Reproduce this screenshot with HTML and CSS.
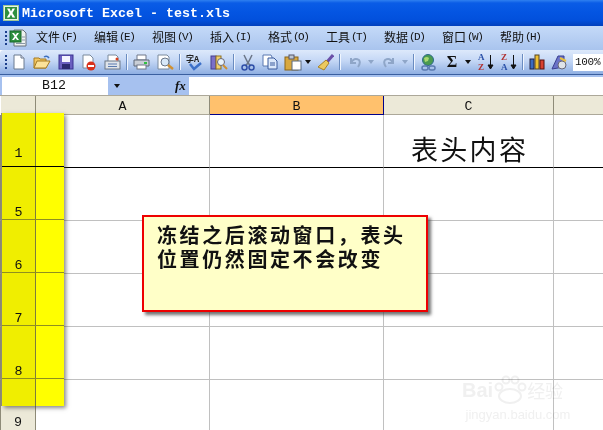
FILE: index.html
```html
<!DOCTYPE html>
<html lang="zh">
<head>
<meta charset="utf-8">
<title>Microsoft Excel - test.xls</title>
<link rel="stylesheet" href="styles.css">
</head>
<body>
<div class="titlebar">
  <svg class="appicon" width="16" height="16" viewBox="0 0 16 16"><rect x=".5" y=".5" width="15" height="15" fill="#e8f4e4" stroke="#9fc79a"/><rect x="2" y="2" width="12" height="12" fill="#2f8f3f"/><path d="M4 3.500h2.600L8 6.500l1.500-3H12L9.400 8l2.800 4.600H9.500L8 9.600l-1.600 3H3.800L6.600 8z" fill="#fff"/></svg>
  <span class="title">Microsoft Excel - test.xls</span>
</div>
<div class="menubar">
  <span class="grip"></span>
  <svg class="docicon" width="18" height="18" viewBox="0 0 18 18"><path d="M5 1h9l3 3v13H5z" fill="#eef2f0" stroke="#66707c"/><rect x="1" y="2" width="11" height="11" fill="#2f8f3f" stroke="#16662a"/><path d="M3 4h2l1.500 2L8 4h2L7.500 7.500 10 11H8L6.500 9 5 11H3l2.500-3.500z" fill="#fff"/><path d="M13 8h3M13 11h3M7 14.500h9" stroke="#8a98a8"/></svg>
  <nav class="menus">
    <span class="menu">文件<i>(F)</i></span>
    <span class="menu">编辑<i>(E)</i></span>
    <span class="menu">视图<i>(V)</i></span>
    <span class="menu">插入<i>(I)</i></span>
    <span class="menu">格式<i>(O)</i></span>
    <span class="menu">工具<i>(T)</i></span>
    <span class="menu">数据<i>(D)</i></span>
    <span class="menu">窗口<i>(W)</i></span>
    <span class="menu">帮助<i>(H)</i></span>
  </nav>
</div>
<div class="toolbar">
  <span class="grip"></span>
  <svg class="tool" width="14" height="16" viewBox="0 0 14 16"><path d="M2 1h7l3 3v11H2z" fill="#fff" stroke="#6a7a90"/><path d="M9 1v3h3" fill="#dde" stroke="#6a7a90"/></svg>
  <svg class="tool" width="18" height="16" viewBox="0 0 18 16"><path d="M1 4h5l1 1h6v9H1z" fill="#f2c660" stroke="#a67a20"/><path d="M1 14l3-7h13l-4 7z" fill="#fbe29a" stroke="#a67a20"/><path d="M11 3q3-2 5 1" fill="none" stroke="#3c6fc0" stroke-width="1.500"/></svg>
  <svg class="tool" width="16" height="16" viewBox="0 0 16 16"><rect x="1" y="1" width="14" height="14" fill="#6a5fc0" stroke="#3a3290"/><rect x="4" y="2" width="8" height="6" fill="#f4f4ff"/><rect x="4" y="10" width="8" height="5" fill="#2c2a70"/></svg>
  <svg class="tool" width="16" height="17" viewBox="0 0 16 17"><path d="M2 1h7l3 3v10H2z" fill="#fff" stroke="#7a8a9c"/><circle cx="10" cy="12" r="4.500" fill="#d8301c"/><rect x="7" y="11" width="6" height="2" fill="#fff"/></svg>
  <svg class="tool" width="17" height="16" viewBox="0 0 17 16"><path d="M4 1h8l2 2v5H4z" fill="#fff" stroke="#7a8a9c"/><rect x="1" y="7" width="15" height="8" fill="#dfe4ea" stroke="#6c7888"/><path d="M4 10h9M4 12.500h9" stroke="#5a7ab0"/><circle cx="13" cy="5" r="1.500" fill="#d84020"/></svg>
  <span class="sep"></span>
  <svg class="tool" width="17" height="16" viewBox="0 0 17 16"><path d="M4 1h9v5H4z" fill="#fff" stroke="#70798a"/><path d="M1 6h15v6H1z" fill="#c9ced6" stroke="#5e6878"/><rect x="4" y="11" width="9" height="4" fill="#fff" stroke="#70798a"/><rect x="11" y="8" width="3" height="2" fill="#30c040"/></svg>
  <svg class="tool" width="17" height="16" viewBox="0 0 17 16"><path d="M1 1h9l2 2v12H1z" fill="#fff" stroke="#7a8a9c"/><circle cx="8" cy="8" r="4" fill="#d8e8f8" stroke="#6a7688"/><path d="M11 11l5 4" stroke="#d09030" stroke-width="2.500"/></svg>
  <span class="sep"></span>
  <svg class="tool tight" width="18" height="17" viewBox="0 0 18 17"><text class="spelltext" x="0" y="8">字A</text><path d="M4 10l4 5 7-6" fill="none" stroke="#3c70c8" stroke-width="2.500"/></svg>
  <svg class="tool tight" width="18" height="17" viewBox="0 0 18 17"><rect x="1" y="2" width="5" height="13" fill="#7a70c8" stroke="#443c90"/><rect x="6" y="2" width="5" height="13" fill="#f0d070" stroke="#907020"/><circle cx="11" cy="8" r="3.500" fill="#e8f2fb" stroke="#667"/><path d="M13 11l4 4" stroke="#d09030" stroke-width="2"/></svg>
  <span class="sep"></span>
  <svg class="tool tight" width="16" height="17" viewBox="0 0 16 17"><path d="M4 1l4 8 4-8M8 9l-3 3M8 9l3 3" fill="none" stroke="#6b7688" stroke-width="1.500"/><circle cx="4.500" cy="13.500" r="2.500" fill="none" stroke="#2f4fa8" stroke-width="1.500"/><circle cx="11.500" cy="13.500" r="2.500" fill="none" stroke="#2f4fa8" stroke-width="1.500"/></svg>
  <svg class="tool tight" width="16" height="16" viewBox="0 0 16 16"><path d="M1 1h8l1 2v9H1z" fill="#fff" stroke="#5a78b0"/><path d="M6 4h6l3 3v8H6z" fill="#dbe8fa" stroke="#3a5a9c"/><path d="M8 9h5M8 11h5" stroke="#3a5a9c"/></svg>
  <span class="pastegroup">
    <svg width="18" height="17" viewBox="0 0 18 17"><rect x="1" y="3" width="13" height="13" fill="#d8a840" stroke="#8a6418"/><rect x="5" y="1" width="5" height="4" fill="#bcc6d2" stroke="#556"/><rect x="8" y="7" width="9" height="9" fill="#fff" stroke="#5a6a80"/></svg>
    <span class="caret"></span>
  </span>
  <svg class="tool tight" width="17" height="17" viewBox="0 0 17 17"><path d="M16 1l-6 7" stroke="#6a50a8" stroke-width="3"/><path d="M9 6l3 3-5 7-6-3z" fill="#ecc960" stroke="#a88228"/></svg>
  <span class="sep"></span>
  <span class="pastegroup muted">
    <svg width="14" height="14" viewBox="0 0 14 14"><path d="M3 3v5h5" fill="none" stroke="#8fa6c8" stroke-width="2"/><path d="M3 8q3-6 8-3 2 3-1 7" fill="none" stroke="#8fa6c8" stroke-width="2"/></svg>
    <span class="caret faded"></span>
  </span>
  <span class="pastegroup muted">
    <svg width="14" height="14" viewBox="0 0 14 14"><path d="M11 3v5H6" fill="none" stroke="#8fa6c8" stroke-width="2"/><path d="M11 8q-3-6-8-3-2 3 1 7" fill="none" stroke="#8fa6c8" stroke-width="2"/></svg>
    <span class="caret faded"></span>
  </span>
  <span class="sep"></span>
  <svg class="tool tight" width="17" height="17" viewBox="0 0 17 17"><circle cx="8" cy="6" r="5.500" fill="#4a9a50" stroke="#2c6a8a"/><path d="M4 4q3-2 5 0l-1 3-3 1z" fill="#a8d870"/><rect x="2" y="12" width="6" height="4" rx="2" fill="none" stroke="#5a7ab0" stroke-width="1.500"/><rect x="9" y="12" width="6" height="4" rx="2" fill="none" stroke="#5a7ab0" stroke-width="1.500"/></svg>
  <span class="sigma">Σ</span>
  <span class="caret"></span>
  <span class="sort"><b class="blue">A</b><b class="red">Z</b></span>
  <svg class="arrow" width="7" height="15" viewBox="0 0 7 15"><path d="M3.500 0v13M1 10l2.500 4L6 10z" fill="#111" stroke="#111"/></svg>
  <span class="sort"><b class="red">Z</b><b class="blue">A</b></span>
  <svg class="arrow" width="7" height="15" viewBox="0 0 7 15"><path d="M3.500 0v13M1 10l2.500 4L6 10z" fill="#111" stroke="#111"/></svg>
  <span class="sep"></span>
  <svg class="tool tight" width="16" height="16" viewBox="0 0 16 16"><rect x="1" y="5" width="4" height="10" fill="#3a6ac0" stroke="#224"/><rect x="6" y="1" width="4" height="14" fill="#f0c030" stroke="#542"/><rect x="11" y="6" width="4" height="9" fill="#d84030" stroke="#511"/></svg>
  <svg class="tool tight" width="17" height="17" viewBox="0 0 17 17"><path d="M1 15L7 2h6v11z" fill="#6a72c8" stroke="#3a3f90"/><circle cx="11" cy="11" r="4" fill="#dfe3e8" stroke="#667"/><path d="M9 4l6 3" stroke="#e8c040" stroke-width="2"/></svg>
  <span class="zoomvalue">100%</span>
</div>
<div class="formulabar">
  <span class="namebox">B12</span>
  <span class="namecaret"><span class="caret"></span></span>
  <span class="fx">fx</span>
  <span class="formula"></span>
</div>
<main class="sheet">
  <div class="grid">
    <div class="colhead corner"></div>
    <div class="colhead">A</div>
    <div class="colhead active">B</div>
    <div class="colhead">C</div>
    <div class="colhead"></div>

    <div class="rowhead"></div>
    <div class="cell headline"></div>
    <div class="cell headline"></div>
    <div class="cell headline"></div>
    <div class="cell headline last"></div>

    <div class="rowhead"></div><div class="cell"></div><div class="cell"></div><div class="cell"></div><div class="cell last"></div>
    <div class="rowhead"></div><div class="cell"></div><div class="cell"></div><div class="cell"></div><div class="cell last"></div>
    <div class="rowhead"></div><div class="cell"></div><div class="cell"></div><div class="cell"></div><div class="cell last"></div>
    <div class="rowhead"></div><div class="cell"></div><div class="cell"></div><div class="cell"></div><div class="cell last"></div>
    <div class="rowhead nine">9</div><div class="cell"></div><div class="cell"></div><div class="cell"></div><div class="cell last"></div>
  </div>

  <div class="headertext">表头内容</div>

  <div class="frozen">
    <div class="frozenrow first"><span class="frozenlabel">1</span><span class="frozenblank"></span></div>
    <div class="frozenrow"><span class="frozenlabel">5</span><span class="frozenblank"></span></div>
    <div class="frozenrow"><span class="frozenlabel">6</span><span class="frozenblank"></span></div>
    <div class="frozenrow"><span class="frozenlabel">7</span><span class="frozenblank"></span></div>
    <div class="frozenrow"><span class="frozenlabel">8</span><span class="frozenblank"></span></div>
    <div class="frozenrow tail"><span class="frozenlabel"></span><span class="frozenblank"></span></div>
  </div>

  <div class="note">冻结之后滚动窗口，表头<br>位置仍然固定不会改变</div>

  <div class="watermark">
    <div class="wm-top">
      <span class="wm-brand">Bai</span>
      <svg width="34" height="30" viewBox="0 0 34 30"><g fill="none" stroke="#f0f0f0" stroke-width="2"><ellipse cx="17" cy="21" rx="11" ry="7"/><circle cx="6" cy="12" r="3.500"/><circle cx="13" cy="5" r="3.500"/><circle cx="22" cy="5" r="3.500"/><circle cx="29" cy="12" r="3.500"/></g></svg>
      <span class="wm-brand wm-cjk">经验</span>
    </div>
    <div class="wm-url">jingyan.baidu.com</div>
  </div>
</main>
</body>
</html>
```

FILE: styles.css
```css
* { box-sizing: border-box; }

html, body {
  margin: 0;
  padding: 0;
  width: 603px;
  height: 430px;
  overflow: hidden;
  background: #fff;
  font-family: "Liberation Mono", "Noto Sans CJK SC", monospace;
}

.titlebar {
  height: 26px;
  display: flex;
  align-items: center;
  gap: 3px;
  padding: 0 0 0 3px;
  background: linear-gradient(#2f80f0 0, #0a5ce6 3px, #0455e2 12px, #0250dc 20px, #0240bc 26px);
}

.appicon { flex: none; }

.title {
  color: #fff;
  font-weight: 700;
  font-size: 13.33px;
  white-space: nowrap;
}

.menubar {
  height: 24px;
  display: flex;
  align-items: center;
  padding-left: 5px;
  background: linear-gradient(#c5daf8, #a9c4ee);
}

.grip {
  width: 2px;
  height: 14px;
  flex: none;
  background: repeating-linear-gradient(#1c3f8c 0 2px, transparent 2px 4px);
}

.docicon { flex: none; margin-left: 2px; }

.menus {
  display: flex;
  margin-left: 9px;
  gap: 18px;
  font-family: "Noto Sans CJK SC", sans-serif;
  font-size: 12px;
  line-height: 16px;
  color: #111;
  transform: translateY(-1px);
}

.menu { white-space: nowrap; display: flex; align-items: center; width: 40px; }

.menu i {
  font-style: normal;
  font-family: "Liberation Mono", monospace;
  font-size: 11px;
  margin-left: 1px;
  letter-spacing: -1.500px;
}

.toolbar {
  height: 25px;
  display: flex;
  align-items: center;
  padding-left: 5px;
  border-radius: 4px 0 0 0;
  background: linear-gradient(#dde9fb, #c4d7f5 45%, #8fafe2);
  border-bottom: 1px solid #3a5f9f;
}

.tool { flex: none; margin-left: 7px; }
.tool.tight { margin-left: 6px; }
.toolbar .grip + .tool { margin-left: 5px; }

.sep {
  flex: none;
  width: 1px;
  height: 16px;
  margin-left: 5px;
  background: #6a8cc0;
  box-shadow: 1px 0 0 #f0f6ff;
}

.sep + .tool { margin-left: 6px; }

.pastegroup {
  display: inline-flex;
  align-items: center;
  gap: 3px;
  flex: none;
  margin-left: 6px;
}

.muted { margin-left: 8px; gap: 6px; }

.caret {
  display: inline-block;
  flex: none;
  width: 0;
  height: 0;
  border-left: 3.500px solid transparent;
  border-right: 3.500px solid transparent;
  border-top: 4px solid #111;
}

.faded { border-top-color: #8fa6c8; }

.spelltext {
  font-family: "Noto Sans CJK SC", sans-serif;
  font-size: 8px;
  font-weight: 700;
  fill: #222;
}

.sigma {
  flex: none;
  width: 22px;
  margin-left: 4px;
  margin-right: 2px;
  text-align: center;
  font-family: "Liberation Serif", serif;
  font-weight: 700;
  font-size: 16px;
  line-height: 18px;
  color: #111;
}

.sort {
  flex: none;
  display: flex;
  flex-direction: column;
  width: 7px;
  margin-left: 7px;
  font-family: "Liberation Serif", serif;
  font-size: 9px;
  line-height: 10px;
}

.blue { color: #2a50a8; }
.red { color: #b03030; }
.arrow { flex: none; margin-left: 2px; }

.zoomvalue {
  flex: 1;
  margin-left: 5px;
  height: 17px;
  padding-left: 2px;
  background: #fff;
  font-family: "Liberation Mono", monospace;
  font-size: 11px;
  letter-spacing: -0.300px;
  line-height: 17px;
  color: #111;
  overflow: hidden;
}

.formulabar {
  height: 20px;
  display: flex;
  background: #a6c1ef;
  padding: 2px 0 0 2px;
}

.namebox {
  width: 106px;
  height: 18px;
  background: #fff;
  color: #111;
  font-size: 13.33px;
  line-height: 18px;
  text-align: center;
  padding-right: 2px;
}

.namecaret {
  width: 16px;
  display: flex;
  align-items: center;
  justify-content: center;
  margin-left: 1px;
}

.fx {
  margin-left: 50px;
  width: 13px;
  font-family: "Liberation Serif", serif;
  font-style: italic;
  font-weight: 700;
  font-size: 13px;
  line-height: 17px;
  color: #111;
}

.formula { flex: 1; height: 18px; margin-left: 1px; background: #fff; }

.sheet {
  position: relative;
  height: 335px;
  overflow: hidden;
  background: #fff;
  border-top: 1px solid #aca899;
}

.grid {
  display: grid;
  grid-template-columns: 35px 174px 174px 170px 50px;
  grid-template-rows: 19px 53px 53px 53px 53px 53px 53px;
  padding-left: 1px;
  background: #fff;
}

.colhead {
  background: #ece9d8;
  border-right: 1px solid #8e8b78;
  border-bottom: 1px solid #aca899;
  color: #111;
  font-size: 13.33px;
  line-height: 18px;
  text-align: center;
  padding-top: 2px;
}

.active {
  background: #ffc16d;
  border-right: 1px solid #00008a;
  border-bottom: 1px solid #00008a;
}

.rowhead {
  background: #ece9d8;
  border-right: 1px solid #8e8b78;
  border-bottom: 1px solid #aca899;
  border-left: 1px solid #8e8b78;
  margin-left: -1px;
}

.nine {
  padding-top: 34px;
  text-align: center;
  color: #111;
  font-size: 13.33px;
  line-height: 18px;
}

.cell {
  border-right: 1px solid #c0c0c0;
  border-bottom: 1px solid #c0c0c0;
}

.last { border-right: 0; }
.headline { border-bottom-color: #000; }

.headertext {
  position: absolute;
  left: 411px;
  top: 35px;
  font-family: "Noto Sans CJK SC", serif;
  font-size: 27px;
  letter-spacing: 2.300px;
  line-height: 36px;
  color: #111;
}

.frozen {
  position: absolute;
  left: 2px;
  top: 17px;
  width: 62px;
  height: 293px;
  background: #ffff00;
  box-shadow: -1px 0 0 #8e8b78, 2px 2px 4px rgba(60, 60, 60, .6);
}

.frozenrow {
  display: flex;
  height: 53px;
  border-bottom: 1px solid #8f8f20;
}

.frozenrow.first { height: 54px; border-bottom-color: #000; }
.frozenrow.tail { height: 27px; border-bottom: 0; }

.frozenlabel {
  width: 34px;
  background: #f0ee00;
  border-right: 1px solid #7d7d3c;
  color: #111;
  font-size: 13.33px;
  line-height: 13px;
  text-align: center;
  padding-top: 39px;
}

.frozenrow.first .frozenlabel { padding-top: 34px; }
.frozenrow.tail .frozenlabel { padding-top: 0; }

.frozenblank { flex: 1; }

.note {
  position: absolute;
  left: 142px;
  top: 119px;
  width: 286px;
  height: 97px;
  padding: 6px 0 0 13px;
  background: #ffffc8;
  border: 2px solid #ee0000;
  box-shadow: 3px 3px 3px rgba(70, 70, 70, .75);
  font-family: "Noto Sans CJK SC", sans-serif;
  font-weight: 700;
  font-size: 20px;
  letter-spacing: 2.600px;
  line-height: 24px;
  color: #111;
  white-space: nowrap;
}

.watermark {
  position: absolute;
  left: 462px;
  top: 279px;
  width: 112px;
  color: #f0f0f0;
  text-align: center;
  mix-blend-mode: multiply;
}

.wm-top { display: flex; align-items: center; height: 30px; }

.wm-brand {
  font-family: "Liberation Sans", sans-serif;
  font-weight: 700;
  font-size: 20px;
  white-space: nowrap;
}

.wm-cjk {
  font-family: "Noto Sans CJK SC", sans-serif;
  font-size: 18px;
  font-weight: 400;
}

.wm-url {
  font-family: "Liberation Sans", sans-serif;
  font-size: 13px;
  line-height: 14px;
  margin-top: 3px;
}
```
